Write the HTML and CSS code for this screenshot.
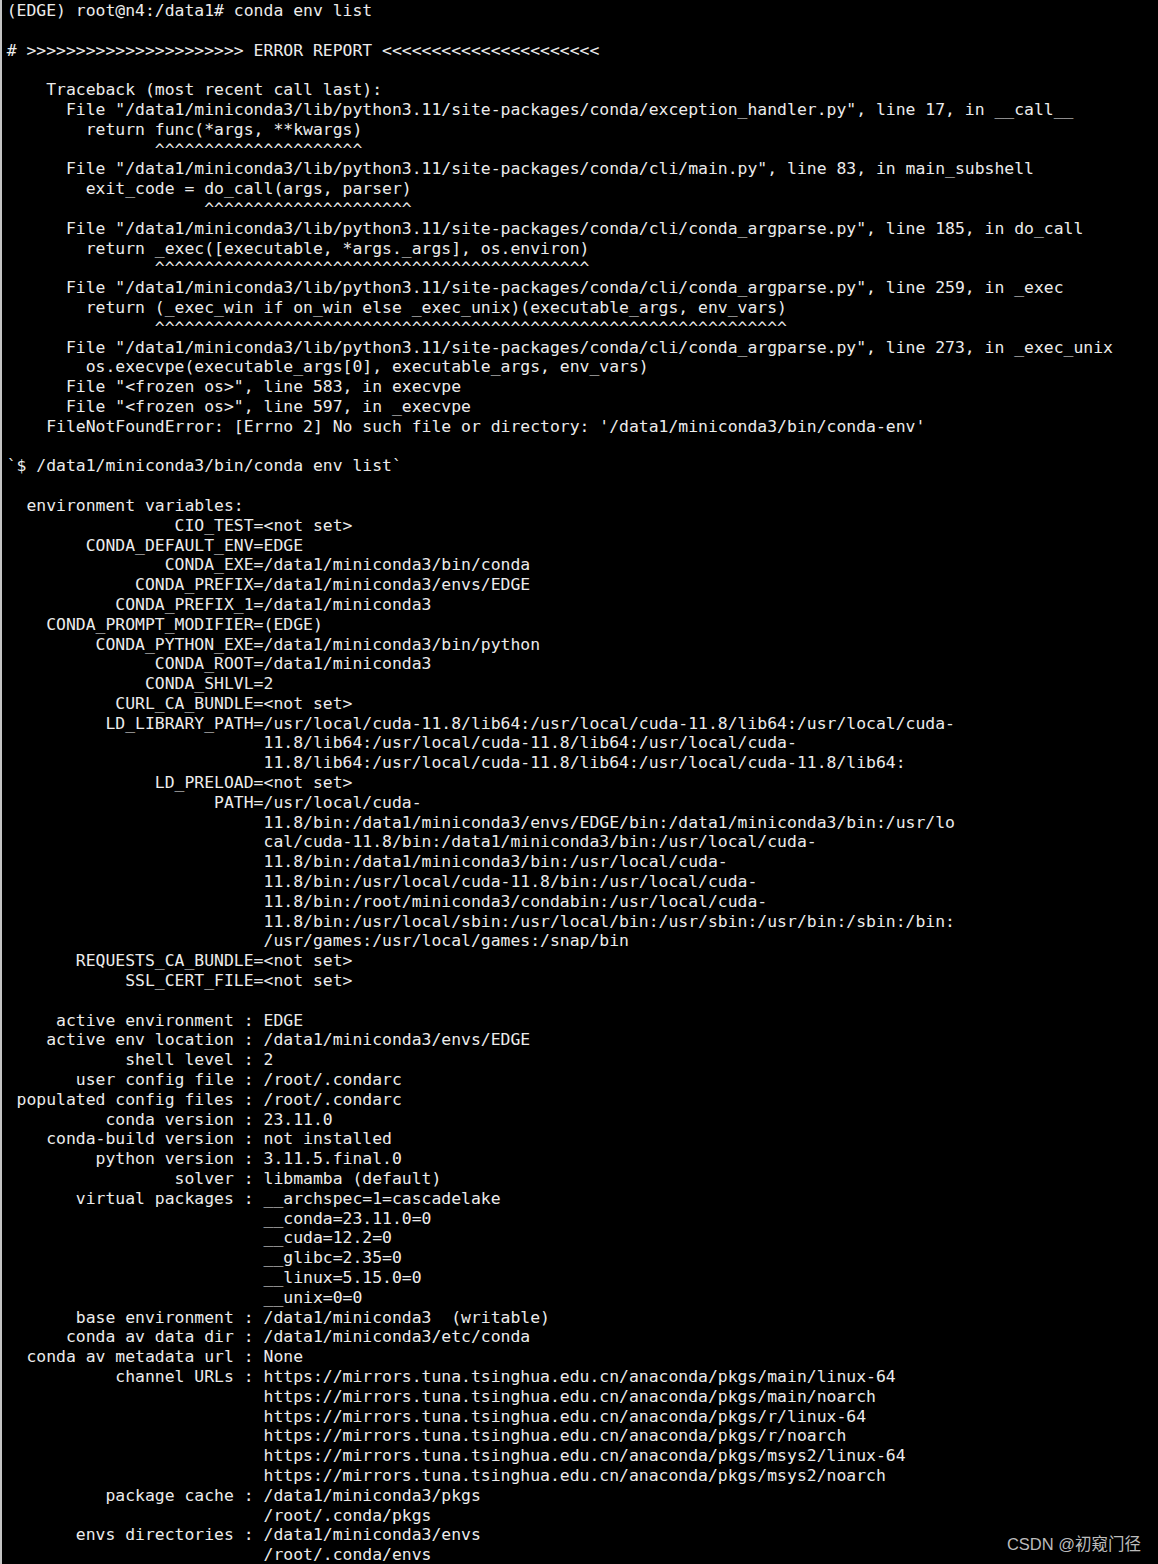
FILE: index.html
```html
<!DOCTYPE html>
<html lang="en">
<head>
<meta charset="utf-8">
<title>conda env list</title>
<link rel="stylesheet" href="styles.css">
</head>
<body>
<main class="terminal">
<pre class="output">(EDGE) root@n4:/data1# conda env list

# &gt;&gt;&gt;&gt;&gt;&gt;&gt;&gt;&gt;&gt;&gt;&gt;&gt;&gt;&gt;&gt;&gt;&gt;&gt;&gt;&gt;&gt; ERROR REPORT &lt;&lt;&lt;&lt;&lt;&lt;&lt;&lt;&lt;&lt;&lt;&lt;&lt;&lt;&lt;&lt;&lt;&lt;&lt;&lt;&lt;&lt;

    Traceback (most recent call last):
      File "/data1/miniconda3/lib/python3.11/site-packages/conda/exception_handler.py", line 17, in __call__
        return func(*args, **kwargs)
               ^^^^^^^^^^^^^^^^^^^^^
      File "/data1/miniconda3/lib/python3.11/site-packages/conda/cli/main.py", line 83, in main_subshell
        exit_code = do_call(args, parser)
                    ^^^^^^^^^^^^^^^^^^^^^
      File "/data1/miniconda3/lib/python3.11/site-packages/conda/cli/conda_argparse.py", line 185, in do_call
        return _exec([executable, *args._args], os.environ)
               ^^^^^^^^^^^^^^^^^^^^^^^^^^^^^^^^^^^^^^^^^^^^
      File "/data1/miniconda3/lib/python3.11/site-packages/conda/cli/conda_argparse.py", line 259, in _exec
        return (_exec_win if on_win else _exec_unix)(executable_args, env_vars)
               ^^^^^^^^^^^^^^^^^^^^^^^^^^^^^^^^^^^^^^^^^^^^^^^^^^^^^^^^^^^^^^^^
      File "/data1/miniconda3/lib/python3.11/site-packages/conda/cli/conda_argparse.py", line 273, in _exec_unix
        os.execvpe(executable_args[0], executable_args, env_vars)
      File "&lt;frozen os&gt;", line 583, in execvpe
      File "&lt;frozen os&gt;", line 597, in _execvpe
    FileNotFoundError: [Errno 2] No such file or directory: '/data1/miniconda3/bin/conda-env'

`$ /data1/miniconda3/bin/conda env list`

  environment variables:
                 CIO_TEST=&lt;not set&gt;
        CONDA_DEFAULT_ENV=EDGE
                CONDA_EXE=/data1/miniconda3/bin/conda
             CONDA_PREFIX=/data1/miniconda3/envs/EDGE
           CONDA_PREFIX_1=/data1/miniconda3
    CONDA_PROMPT_MODIFIER=(EDGE)
         CONDA_PYTHON_EXE=/data1/miniconda3/bin/python
               CONDA_ROOT=/data1/miniconda3
              CONDA_SHLVL=2
           CURL_CA_BUNDLE=&lt;not set&gt;
          LD_LIBRARY_PATH=/usr/local/cuda-11.8/lib64:/usr/local/cuda-11.8/lib64:/usr/local/cuda-
                          11.8/lib64:/usr/local/cuda-11.8/lib64:/usr/local/cuda-
                          11.8/lib64:/usr/local/cuda-11.8/lib64:/usr/local/cuda-11.8/lib64:
               LD_PRELOAD=&lt;not set&gt;
                     PATH=/usr/local/cuda-
                          11.8/bin:/data1/miniconda3/envs/EDGE/bin:/data1/miniconda3/bin:/usr/lo
                          cal/cuda-11.8/bin:/data1/miniconda3/bin:/usr/local/cuda-
                          11.8/bin:/data1/miniconda3/bin:/usr/local/cuda-
                          11.8/bin:/usr/local/cuda-11.8/bin:/usr/local/cuda-
                          11.8/bin:/root/miniconda3/condabin:/usr/local/cuda-
                          11.8/bin:/usr/local/sbin:/usr/local/bin:/usr/sbin:/usr/bin:/sbin:/bin:
                          /usr/games:/usr/local/games:/snap/bin
       REQUESTS_CA_BUNDLE=&lt;not set&gt;
            SSL_CERT_FILE=&lt;not set&gt;

     active environment : EDGE
    active env location : /data1/miniconda3/envs/EDGE
            shell level : 2
       user config file : /root/.condarc
 populated config files : /root/.condarc
          conda version : 23.11.0
    conda-build version : not installed
         python version : 3.11.5.final.0
                 solver : libmamba (default)
       virtual packages : __archspec=1=cascadelake
                          __conda=23.11.0=0
                          __cuda=12.2=0
                          __glibc=2.35=0
                          __linux=5.15.0=0
                          __unix=0=0
       base environment : /data1/miniconda3  (writable)
      conda av data dir : /data1/miniconda3/etc/conda
  conda av metadata url : None
           channel URLs : https://mirrors.tuna.tsinghua.edu.cn/anaconda/pkgs/main/linux-64
                          https://mirrors.tuna.tsinghua.edu.cn/anaconda/pkgs/main/noarch
                          https://mirrors.tuna.tsinghua.edu.cn/anaconda/pkgs/r/linux-64
                          https://mirrors.tuna.tsinghua.edu.cn/anaconda/pkgs/r/noarch
                          https://mirrors.tuna.tsinghua.edu.cn/anaconda/pkgs/msys2/linux-64
                          https://mirrors.tuna.tsinghua.edu.cn/anaconda/pkgs/msys2/noarch
          package cache : /data1/miniconda3/pkgs
                          /root/.conda/pkgs
       envs directories : /data1/miniconda3/envs
                          /root/.conda/envs</pre>
<div class="watermark">CSDN @初窥门径</div>
</main>
</body>
</html>
```

FILE: styles.css
```css
html, body {
  margin: 0;
  padding: 0;
  background: #000;
}

.terminal {
  position: relative;
  box-sizing: border-box;
  height: 100vh;
  border-left: 2px solid #c4c4c4;
  background: #000;
  overflow: hidden;
}

.output {
  width: max-content;
  margin: 0;
  padding: 1px 0 0 4.7px;
  font-family: "DejaVu Sans Mono", monospace;
  font-size: 16.42px;
  line-height: 19.8px;
  color: #ececec;
  white-space: pre;
}

.watermark {
  position: absolute;
  right: 17px;
  bottom: 10px;
  font-family: "Liberation Sans", "Noto Sans CJK SC", sans-serif;
  font-size: 16.5px;
  line-height: 20px;
  color: #bcbcbc;
}
```
